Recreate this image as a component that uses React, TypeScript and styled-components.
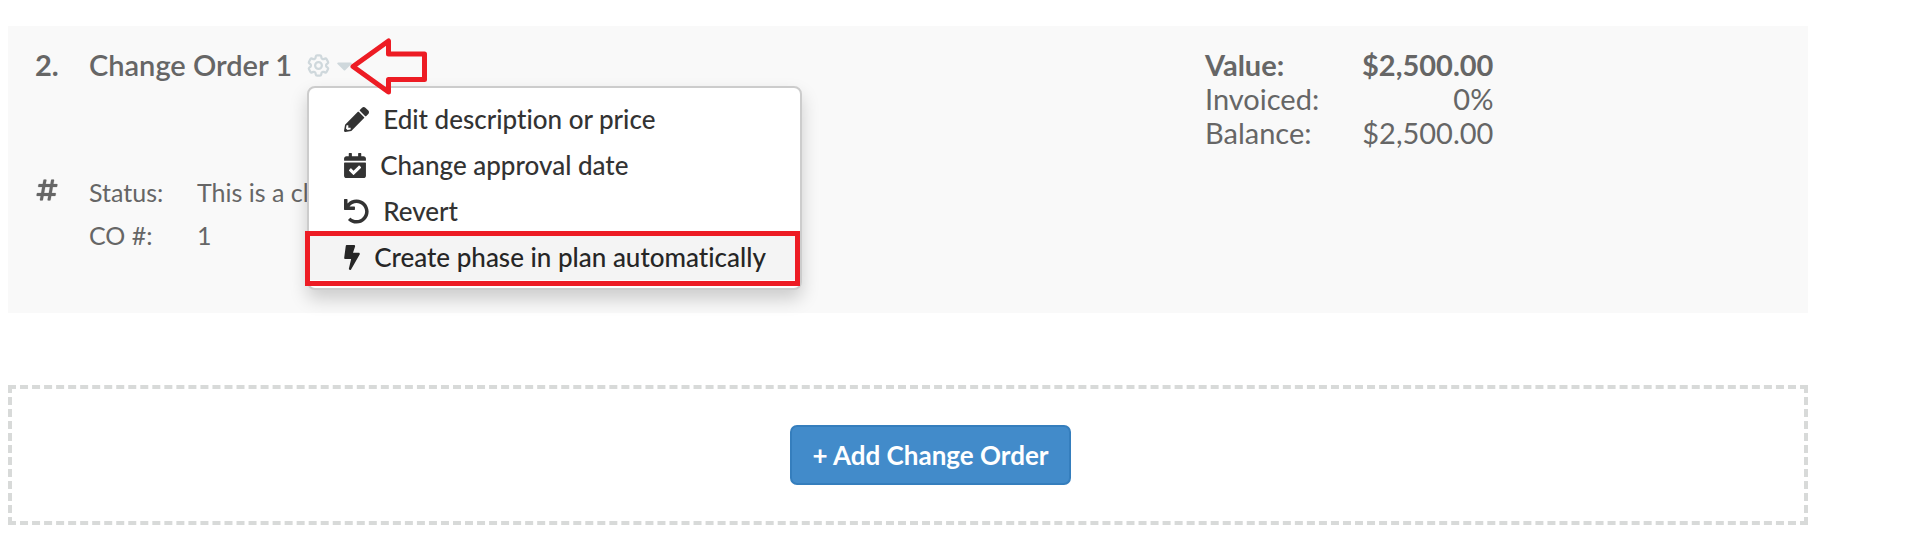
import React from 'react';
import styled, { createGlobalStyle, css } from 'styled-components';
import { FaBolt, FaCalendarCheck, FaCaretDown, FaHashtag, FaUndo } from 'react-icons/fa';
import { HiOutlineCog6Tooth } from 'react-icons/hi2';

const GlobalStyle = createGlobalStyle`
  *, *::before, *::after { box-sizing: border-box; }
  body {
    margin: 0;
    background: #fff;
    color: #666;
    font-family: Lato, "Open Sans", sans-serif;
    font-variant-ligatures: none;
  }
  button { font: inherit; cursor: pointer; }
`;

const Page = styled.main`
  display: flex;
  flex-direction: column;
  gap: 72px;
  padding: 26px 123px 24px 8px;
`;

const OrderCard = styled.section`
  display: grid;
  grid-template-columns: minmax(0, 2fr) minmax(0, 1fr);
  padding: 22px 24px 56px 27px;
  background: #f9f9f9;
`;

const OrderMain = styled.div`
  display: flex;
  flex-direction: column;
  gap: 89px;
`;

const OrderRow = styled.div`
  display: grid;
  grid-template-columns: 54px minmax(0, 1fr);
`;

const OrderNumber = styled.span`
  font-size: 29px;
  line-height: 34px;
  font-weight: 700;
`;

const TitleLine = styled.div`
  display: flex;
  align-items: center;
  gap: 13px;
  height: 34px;
`;

const Title = styled.h2`
  margin: 0;
  font-size: 29px;
  line-height: 34px;
  font-weight: 600;
  white-space: nowrap;
`;

const Dropdown = styled.div`
  position: relative;
  display: flex;
`;

const GearButton = styled.button`
  display: flex;
  align-items: center;
  height: 34px;
  padding: 0;
  border: 0;
  background: none;
  color: #cfd8dc;

  svg:first-child path { stroke-width: 2; }
`;

const Menu = styled.ul`
  position: absolute;
  top: 38px;
  left: 2px;
  z-index: 1;
  width: 495px;
  margin: 0;
  padding: 8px 0;
  list-style: none;
  background: #fff;
  border: 2px solid #ccc;
  border-radius: 8px;
  box-shadow: 0 9px 18px rgba(0, 0, 0, 0.18);
`;

const MenuEntry = styled.li`
  position: relative;
`;

const MenuButton = styled.button<{ $active?: boolean }>`
  display: flex;
  align-items: center;
  gap: 14px;
  width: 100%;
  height: 46px;
  padding: 0 0 0 35px;
  border: 0;
  background: none;
  color: #333;
  font-size: 26px;
  line-height: 36px;
  font-weight: 500;
  white-space: nowrap;

  ${(p) => p.$active && css`
    background: #f4f4f4;
    color: #262626;
  `}
`;

const MenuIcon = styled.span<{ $width: number }>`
  display: flex;
  flex: none;

  svg {
    width: ${(p) => p.$width}px;
    height: 25px;
  }
`;

const Highlight = styled.span`
  position: absolute;
  inset: -3px 0 -6px -4px;
  border: 5px solid #ed1c24;
  pointer-events: none;
`;

const PointerArrow = styled.svg`
  position: absolute;
  top: -12px;
  left: 44px;
  z-index: 2;
  pointer-events: none;
`;

const HashCell = styled.span`
  display: flex;
  padding-top: 7px;

  svg { stroke: currentColor; stroke-width: 4; }
`;

const Details = styled.dl`
  display: grid;
  grid-template-columns: 108px minmax(0, 1fr);
  margin: 0;
  font-size: 25px;
  line-height: 43px;

  dd { margin: 0; }
`;

const Totals = styled.table`
  justify-self: start;
  align-self: start;
  margin-left: 4px;
  border-collapse: collapse;
  font-size: 29px;
  line-height: 34px;
`;

const TotalRow = styled.tr<{ $strong?: boolean }>`
  font-weight: ${(p) => (p.$strong ? 700 : 400)};

  th {
    width: 157px;
    padding: 0;
    font-weight: inherit;
    text-align: left;
  }

  td {
    padding: 0;
    text-align: right;
  }
`;

const AddArea = styled.section`
  display: flex;
  justify-content: center;
  padding: 36px 0 36px 45px;
  border: 4px dashed #d8dad9;
`;

const AddButton = styled.button`
  height: 60px;
  padding: 0 20px;
  border: 2px solid #357ebd;
  border-radius: 7px;
  background: #428bca;
  color: #fff;
  font-size: 26px;
  line-height: 36px;
  font-weight: 700;
  white-space: nowrap;
`;

const PencilIcon = () => (
  <svg viewBox="0 0 512 512" fill="currentColor" aria-hidden="true">
    <path d="M497.9 142.1l-46.1 46.1c-4.7 4.7-12.3 4.7-17 0l-111-111c-4.7-4.7-4.7-12.3 0-17l46.1-46.1c18.7-18.7 49.1-18.7 67.9 0l60.1 60.1c18.8 18.7 18.8 49.1 0 67.9zM284.2 99.8L21.6 362.4.4 483.9c-2.9 16.4 11.4 30.6 27.8 27.8l121.5-21.3 262.6-262.6c4.7-4.7 4.7-12.3 0-17l-111-111c-4.8-4.7-12.4-4.7-17.1 0zM88 424h48v36.3l-64.5 11.3-31.1-31.1L51.7 376H88v48z" />
  </svg>
);

const actions = [
  { label: 'Edit description or price', icon: <PencilIcon />, iconWidth: 25 },
  { label: 'Change approval date', icon: <FaCalendarCheck />, iconWidth: 22 },
  { label: 'Revert', icon: <FaUndo />, iconWidth: 25 },
  { label: 'Create phase in plan automatically', icon: <FaBolt />, iconWidth: 16, active: true },
];

const totals = [
  { label: 'Value:', amount: '$2,500.00', strong: true },
  { label: 'Invoiced:', amount: '0%' },
  { label: 'Balance:', amount: '$2,500.00' },
];

export default function App() {
  return (
    <>
      <GlobalStyle />
      <Page>
        <OrderCard>
          <OrderMain>
            <OrderRow>
              <OrderNumber>2.</OrderNumber>
              <TitleLine>
                <Title>Change Order 1</Title>
                <Dropdown>
                  <GearButton type="button" aria-label="Change order actions" aria-expanded="true">
                    <HiOutlineCog6Tooth size={27} />
                    <FaCaretDown size={25} />
                  </GearButton>
                  <Menu>
                    {actions.map((a) => (
                      <MenuEntry key={a.label}>
                        <MenuButton type="button" $active={a.active}>
                          <MenuIcon $width={a.iconWidth}>{a.icon}</MenuIcon>
                          {a.label}
                        </MenuButton>
                        {a.active && <Highlight />}
                      </MenuEntry>
                    ))}
                  </Menu>
                  <PointerArrow width="80" height="60" viewBox="0 0 80 60" aria-hidden="true">
                    <path
                      d="M4 30.500L39.500 5V18H75.500V43.500H39.500V56Z"
                      fill="none"
                      stroke="#ed1c24"
                      strokeWidth="5"
                      strokeLinejoin="round"
                    />
                  </PointerArrow>
                </Dropdown>
              </TitleLine>
            </OrderRow>
            <OrderRow>
              <HashCell>
                <FaHashtag size={24} />
              </HashCell>
              <Details>
                <dt>Status:</dt>
                <dd>This is a cl</dd>
                <dt>CO #:</dt>
                <dd>1</dd>
              </Details>
            </OrderRow>
          </OrderMain>
          <Totals>
            <tbody>
              {totals.map((t) => (
                <TotalRow key={t.label} $strong={t.strong}>
                  <th scope="row">{t.label}</th>
                  <td>{t.amount}</td>
                </TotalRow>
              ))}
            </tbody>
          </Totals>
        </OrderCard>
        <AddArea>
          <AddButton type="button">+ Add Change Order</AddButton>
        </AddArea>
      </Page>
    </>
  );
}
